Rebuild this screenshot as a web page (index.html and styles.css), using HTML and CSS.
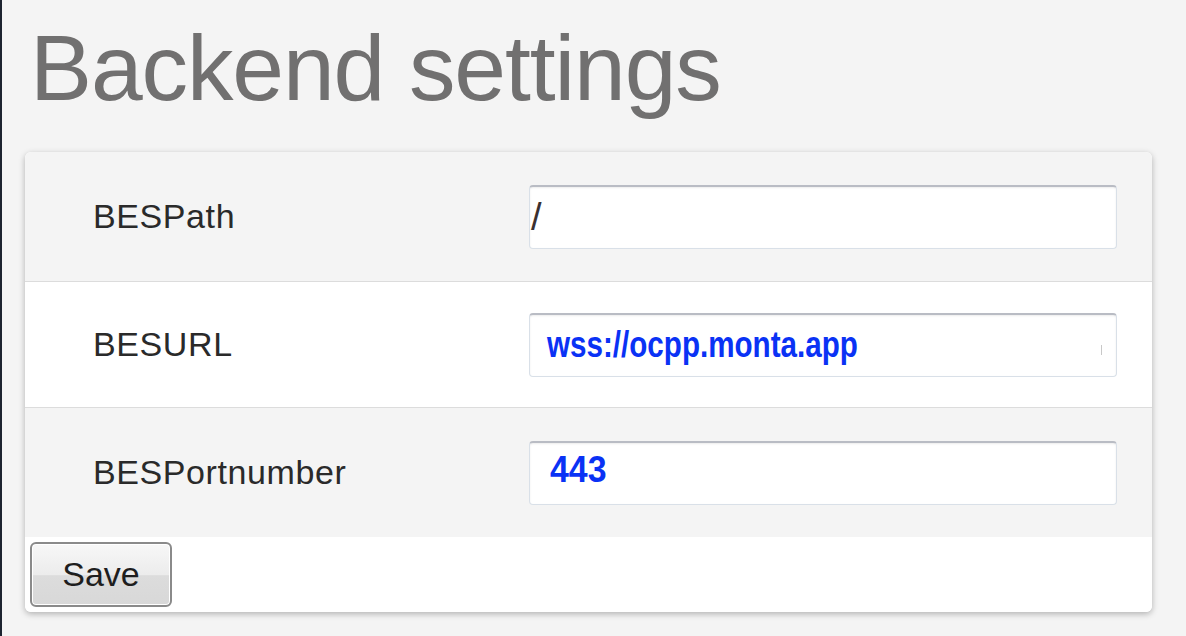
FILE: index.html
```html
<!DOCTYPE html>
<html lang="en">
<head>
<meta charset="utf-8">
<title>Backend settings</title>
<link rel="stylesheet" href="styles.css">
</head>
<body>
<div class="page">
  <h1 class="title">Backend settings</h1>
  <div class="card">
    <div class="row row-1 shaded">
      <div class="label">BESPath</div>
      <div class="field"><span class="value value-path">/</span></div>
    </div>
    <div class="row row-2">
      <div class="label">BESURL</div>
      <div class="field"><span class="value value-blue value-url">wss://ocpp.monta.app</span><span class="caret"></span></div>
    </div>
    <div class="row row-3 shaded">
      <div class="label">BESPortnumber</div>
      <div class="field"><span class="value value-blue value-num">443</span></div>
    </div>
    <div class="footer">
      <button class="save" type="button">Save</button>
    </div>
  </div>
</div>
</body>
</html>
```

FILE: styles.css
```css
html, body {
  margin: 0;
  padding: 0;
}
body {
  background: #f4f4f4;
  border-left: 2px solid #1d2430;
  min-height: 636px;
  box-sizing: border-box;
  font-family: "Liberation Sans", Arial, sans-serif;
}
.page {
  padding: 22px 0 0 23px;
}
.title {
  margin: 0 0 37px 5px;
  font-size: 93px;
  line-height: 93px;
  height: 93px;
  font-weight: normal;
  letter-spacing: -1.1px;
  color: #717070;
}
.card {
  width: 1127px;
  height: 460px;
  background: #ffffff;
  border-radius: 6px;
  box-shadow: 0 2px 6px rgba(0, 0, 0, 0.28);
  overflow: hidden;
  display: flex;
  flex-direction: column;
}
.row {
  display: flex;
  align-items: center;
  border-bottom: 1px solid #dcdcdc;
  box-sizing: border-box;
}
.row-1 { height: 130px; }
.row-2 { height: 126px; }
.row-3 { height: 129px; border-bottom: none; }
.shaded {
  background: #f4f4f4;
}
.label {
  width: 436px;
  padding-left: 68px;
  font-size: 34px;
  letter-spacing: 0.6px;
  color: #2a2a2a;
}
.field {
  width: 588px;
  height: 64px;
  box-sizing: border-box;
  background: #ffffff;
  border: 1px solid #d9e0e8;
  border-top: 2px solid #b9bcc4;
  border-radius: 4px;
  box-shadow: inset 0 1px 2px rgba(0, 0, 0, 0.08);
  display: flex;
  align-items: center;
  padding-left: 17px;
  position: relative;
}
.value {
  display: inline-block;
  font-size: 36px;
  line-height: 40px;
  transform-origin: left center;
}
.value-path {
  margin-left: -16px;
  color: #3a3030;
  font-size: 38px;
}
.value-blue {
  color: #0a32f5;
  font-weight: bold;
}
.value-url {
  font-size: 37px;
  transform: scaleX(0.8);
}
.value-num {
  margin-left: 3px;
  margin-top: -6px;
  transform: scaleX(0.94);
}
.caret {
  position: absolute;
  right: 14px;
  top: 30px;
  width: 1px;
  height: 10px;
  background: #c8c8c8;
}
.footer {
  flex: 1;
  background: #ffffff;
  padding: 5px 0 0 5px;
}
.save {
  width: 142px;
  height: 65px;
  margin: 0;
  padding: 0;
  border: 2px solid #8a8a8a;
  border-radius: 6px;
  background: linear-gradient(to bottom, #f7f7f7 0%, #ececec 50%, #dcdcdc 52%, #d8d8d8 100%);
  box-shadow: inset 0 0 0 1px #ffffff;
  font-family: "Liberation Sans", Arial, sans-serif;
  font-size: 34px;
  color: #1e1e1e;
}
```
